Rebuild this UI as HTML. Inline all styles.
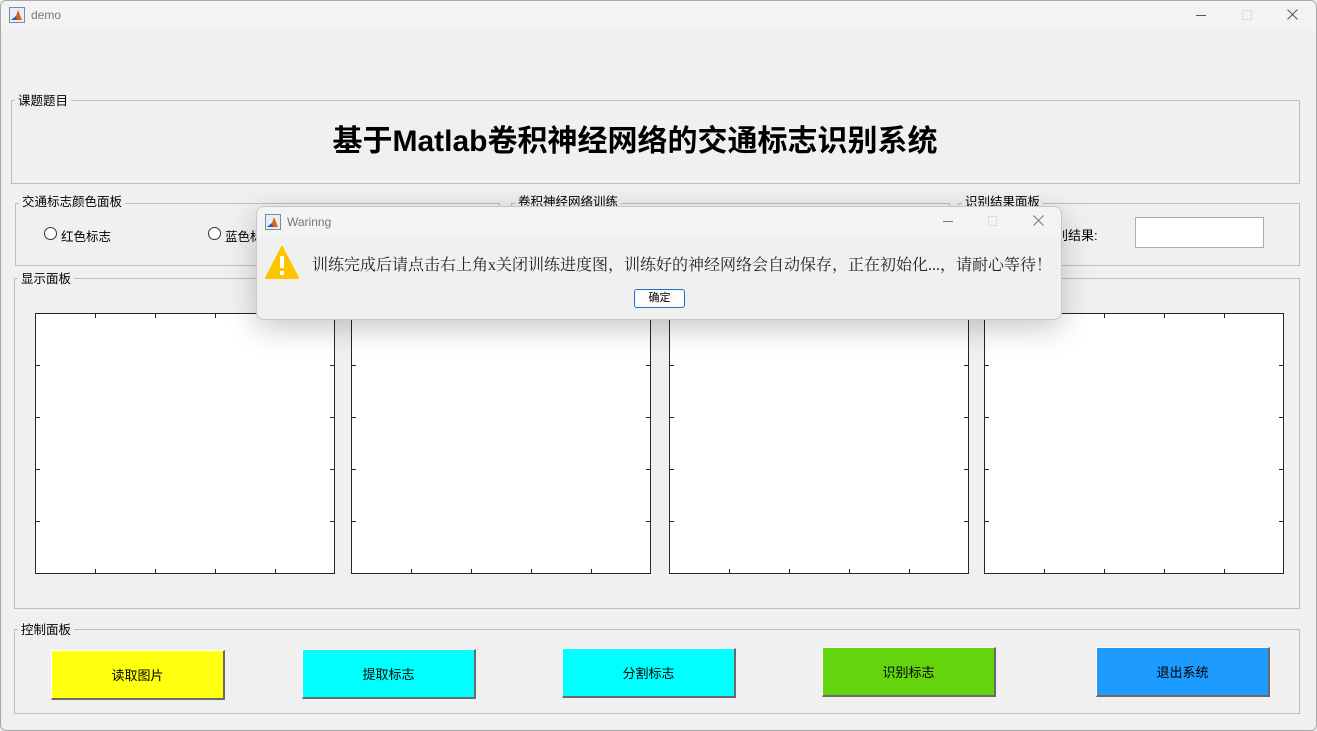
<!DOCTYPE html>
<html><head><meta charset="utf-8"><style>
*{margin:0;padding:0;box-sizing:border-box}
body{width:1317px;height:731px;background:#f0f0f0;font-family:"Liberation Sans","Noto Sans CJK SC",sans-serif;font-size:12px;color:#000;position:relative;overflow:hidden}
.a{position:absolute}
.fs{position:absolute;border:1px solid #bdbdbd}
.lg{position:absolute;background:#f0f0f0;padding:0 3px;font-size:12.5px;line-height:14px}
.ax{position:absolute;background:#fff;border:1px solid #262626;width:300px;height:261px}
.tk{position:absolute;background:#262626}
.btn{position:absolute;width:174px;height:50px;border:1px solid #fff;border-right:2px solid #6a6a6a;border-bottom:2px solid #6a6a6a;display:flex;align-items:center;justify-content:center;font-size:13px}
</style></head><body>
<div class="a" style="left:0;top:0;width:1317px;height:30px;background:#f3f3f3"></div>
<div class="a" style="left:0;top:0;width:1317px;height:731px;border:1px solid #a8a8a8;border-radius:6px"></div>
<svg class="a" style="left:9px;top:7px" width="16" height="16"><rect x="0.5" y="0.5" width="15" height="15" fill="#e8eef8" stroke="#7a8aa0"/><path d="M2 13 L7 9 L9 3 L13 13 Z" fill="#e06010"/><path d="M2 13 L7 9 L8 13Z" fill="#2060c0"/></svg>
<div class="a" style="left:31px;top:8px;font-size:12px;color:#777">demo</div>
<div class="a" style="left:1196px;top:15px;width:10px;height:1px;background:#555"></div>
<div class="a" style="left:1242px;top:10px;width:10px;height:10px;border:1px solid #ddd"></div>
<svg class="a" style="left:1287px;top:9px" width="11" height="11"><path d="M0.5 0.5L10.5 10.5M10.5 0.5L0.5 10.5" stroke="#555" stroke-width="1"/></svg>

<div class="fs" style="left:11px;top:100px;width:1289px;height:84px"></div>
<div class="lg" style="left:15px;top:94px">课题题目</div>
<div class="a" style="left:0;top:123px;width:1270px;text-align:center;font-size:30px;font-weight:bold;line-height:38px">基于Matlab卷积神经网络的交通标志识别系统</div>

<div class="fs" style="left:15px;top:203px;width:485px;height:63px"></div>
<div class="lg" style="left:19px;top:195px">交通标志颜色面板</div>
<div class="a" style="left:44px;top:227px;width:13px;height:13px;border:1px solid #333;border-radius:50%;background:#fff"></div>
<div class="a" style="left:61px;top:226px;font-size:12.5px">红色标志</div>
<div class="a" style="left:208px;top:227px;width:13px;height:13px;border:1px solid #333;border-radius:50%;background:#fff"></div>
<div class="a" style="left:225px;top:226px;font-size:12.5px">蓝色标志</div>
<div class="fs" style="left:511px;top:203px;width:439px;height:63px"></div>
<div class="lg" style="left:515px;top:195px">卷积神经网络训练</div>
<div class="fs" style="left:958px;top:203px;width:342px;height:63px"></div>
<div class="lg" style="left:962px;top:195px">识别结果面板</div>
<div class="a" style="left:1042px;top:225px;font-size:13px">识别结果:</div>
<div class="a" style="left:1135px;top:217px;width:129px;height:31px;background:#fff;border:1px solid #adadad"></div>

<div class="fs" style="left:14px;top:278px;width:1286px;height:331px"></div>
<div class="lg" style="left:18px;top:272px">显示面板</div>
<div id="axes"></div>

<div class="fs" style="left:14px;top:629px;width:1286px;height:85px"></div>
<div class="lg" style="left:18px;top:623px">控制面板</div>
<div class="btn" style="left:51px;top:650px;background:#ffff10">读取图片</div>
<div class="btn" style="left:302px;top:649px;background:#00ffff">提取标志</div>
<div class="btn" style="left:562px;top:648px;background:#00ffff">分割标志</div>
<div class="btn" style="left:822px;top:647px;background:#64d40e">识别标志</div>
<div class="btn" style="left:1096px;top:647px;background:#1e9bff">退出系统</div>

<div class="a" style="left:256px;top:206px;width:806px;height:114px;background:#f0f0f0;border:1px solid #c8c8c8;border-radius:8px;box-shadow:0 8px 30px rgba(0,0,0,0.22);overflow:hidden">
<div style="height:30px;background:#f3f3f3;position:relative">
<svg class="a" style="left:8px;top:7px" width="16" height="16"><rect x="0.5" y="0.5" width="15" height="15" fill="#e8eef8" stroke="#7a8aa0"/><path d="M2 13 L7 9 L9 3 L13 13 Z" fill="#e06010"/><path d="M2 13 L7 9 L8 13Z" fill="#2060c0"/></svg>
<div class="a" style="left:30px;top:8px;color:#777;font-size:12px">Warinng</div>
<div class="a" style="left:686px;top:14px;width:10px;height:1px;background:#777"></div>
<div class="a" style="left:731px;top:9px;width:9px;height:10px;border:1px solid #ddd"></div>
<svg class="a" style="left:776px;top:8px" width="11" height="11"><path d="M0.5 0.5L10.5 10.5M10.5 0.5L0.5 10.5" stroke="#777" stroke-width="1"/></svg>
</div>
<svg class="a" style="left:8px;top:39px" width="34" height="33"><path d="M17 1 L33 32 L1 32 Z" fill="#ffc400" stroke="#ffc400" stroke-linejoin="round" stroke-width="2"/><rect x="15" y="10" width="4" height="12" fill="#fff"/><rect x="15" y="25" width="4" height="4" fill="#fff"/></svg>
<div class="a" style="left:55px;top:45px;font-family:'Liberation Serif','Noto Serif CJK SC',serif;font-size:16px;color:#222;white-space:nowrap">训练完成后请点击右上角x关闭训练进度图，训练好的神经网络会自动保存，正在初始化...，请耐心等待！</div>
<div class="a" style="left:377px;top:82px;width:51px;height:19px;border:1px solid #1f6fc4;border-radius:3px;background:#fdfdfd;text-align:center;font-size:11px;line-height:17px">确定</div>
</div>
<script>
var xs=[35,351,669,984],h='';
xs.forEach(function(x){
h+='<div class="ax" style="left:'+x+'px;top:313px"></div>';
for(var i=1;i<5;i++){var tx=x+i*60;
h+='<div class="tk" style="left:'+tx+'px;top:314px;width:1px;height:4px"></div>';
h+='<div class="tk" style="left:'+tx+'px;top:569px;width:1px;height:4px"></div>';
var ty=313+i*52;
h+='<div class="tk" style="left:'+(x+1)+'px;top:'+ty+'px;width:4px;height:1px"></div>';
h+='<div class="tk" style="left:'+(x+295)+'px;top:'+ty+'px;width:4px;height:1px"></div>';}
});
document.getElementById('axes').innerHTML=h;
</script>
</body></html>
